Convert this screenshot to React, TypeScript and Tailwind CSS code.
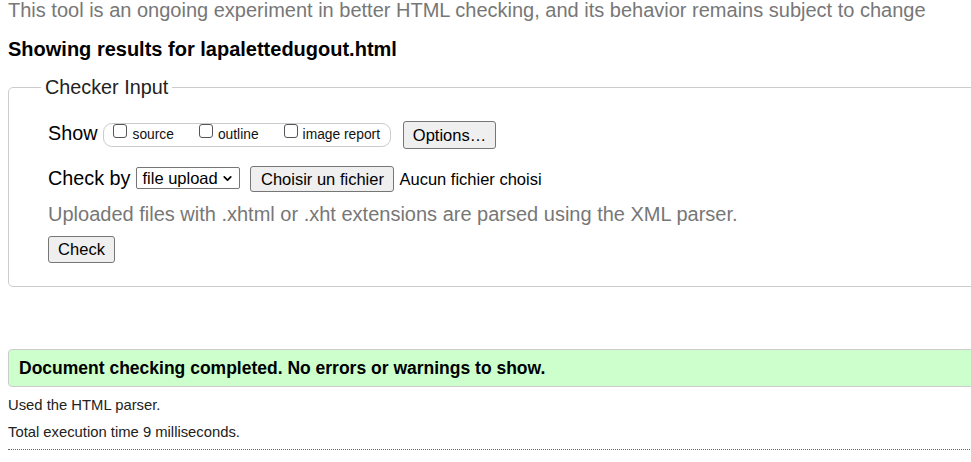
import { ChevronDown } from 'lucide-react';

const showOptions = [
  { id: 'source', label: 'source' },
  { id: 'outline', label: 'outline' },
  { id: 'image-report', label: 'image report' },
];

const btn =
  'flex items-center justify-center rounded-[3px] border border-[#767676] bg-[#efefef] text-[16.5px] text-black';

export default function App() {
  return (
    <div className="min-h-screen w-full overflow-hidden bg-white pl-[8px] font-['Liberation_Sans',Arial,sans-serif] text-black">
      <p className="whitespace-nowrap text-[20px] leading-[20px] text-[#777]">
        This tool is an ongoing experiment in better HTML checking, and its behavior remains subject to change
      </p>
      <h1 className="mt-[17px] whitespace-nowrap text-[20px] font-bold leading-[24px]">
        Showing results for lapalettedugout.html
      </h1>

      {/* Checker input */}
      <fieldset className="mt-[15px] w-[1000px] rounded-[5px] border border-[#ccc] pb-[23px] pl-[32px]">
        <legend className="px-[4px] text-[19.8px] leading-[22px] text-[#222]">Checker Input</legend>
        <div className="pl-[7px] pt-[23px]">
          <div className="flex h-[28px] items-center">
            <span className="mb-[4px] text-[19.8px] leading-[24px]">Show</span>
            <div className="ml-[6px] flex h-[24px] items-center rounded-[9px] border border-[#ccc] pl-[9px] pr-[10px]">
              {showOptions.map((o, i) => (
                <label key={o.id} className={`flex items-center ${i > 0 ? 'ml-[25px]' : ''}`}>
                  <input
                    type="checkbox"
                    className="mb-[8px] h-[14px] w-[14px] appearance-none rounded-[3px] border border-[#555] bg-white"
                  />
                  <span className="ml-[5px] text-[13.8px] leading-[16px] text-[#111]">{o.label}</span>
                </label>
              ))}
            </div>
            <button className={`${btn} ml-[12px] h-[28px] w-[93px]`}>Options…</button>
          </div>

          <div className="mt-[17px] flex h-[26px] items-center">
            <span className="mb-[3px] text-[19.8px] leading-[24px]">Check by</span>
            <span className="relative ml-[6px]">
              <select className="h-[22px] w-[104px] appearance-none rounded-[2px] border border-[#767676] bg-white pl-[5px] text-[16.5px] leading-[20px] text-black">
                <option>file upload</option>
              </select>
              <ChevronDown
                className="pointer-events-none absolute right-[6px] top-[5px] h-[13px] w-[13px] text-black"
                strokeWidth={3.2}
              />
            </span>
            <button className={`${btn} ml-[10px] h-[26px] w-[144px]`}>Choisir un fichier</button>
            <span className="ml-[5px] text-[16.5px] leading-[20px]">Aucun fichier choisi</span>
          </div>

          <p className="mt-[10px] whitespace-nowrap text-[20px] leading-[24px] text-[#777]">
            Uploaded files with .xhtml or .xht extensions are parsed using the XML parser.
          </p>
          <button className={`${btn} mt-[10px] h-[27px] w-[67px]`}>Check</button>
        </div>
      </fieldset>

      {/* Result */}
      <div className="mt-[62px] flex h-[38px] w-[1000px] items-center rounded-l-[4px] border border-[#ccc] bg-[#ccffcc] pl-[10px]">
        <p className="whitespace-nowrap text-[17.5px] font-bold">
          Document checking completed. No errors or warnings to show.
        </p>
      </div>

      <p className="mt-[8px] text-[14.8px] leading-[20px] text-[#222]">Used the HTML parser.</p>
      <p className="mt-[7px] text-[14.8px] leading-[20px] text-[#222]">Total execution time 9 milliseconds.</p>
      <div className="mt-[7px] w-[1000px] border-t border-dotted border-[#666]" />
    </div>
  );
}
